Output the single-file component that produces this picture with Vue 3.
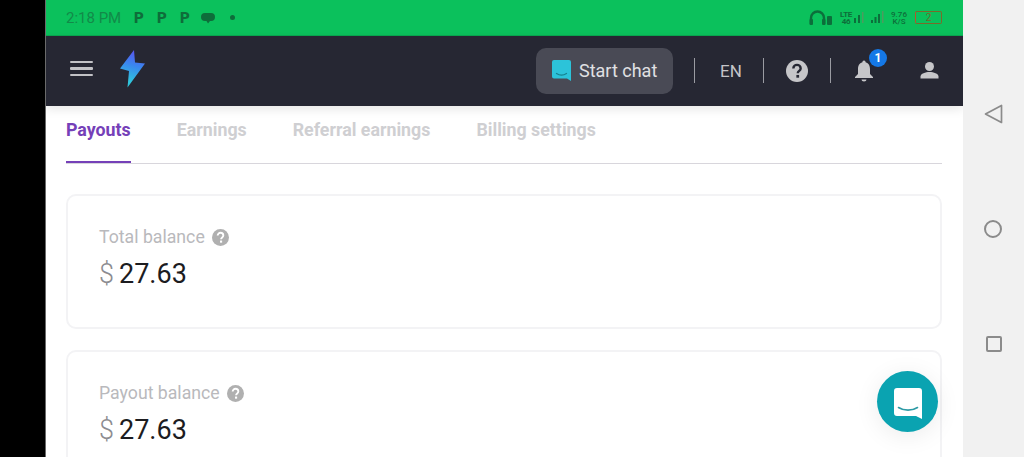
<script setup>
const tabs = ['Payouts', 'Earnings', 'Referral earnings', 'Billing settings']
const cards = [
  { label: 'Total balance', amount: '27.63' },
  { label: 'Payout balance', amount: '27.63' }
]
</script>

<template>
  <div class="screen">
    <div class="left-edge"></div>

    <div class="phone">
      <div class="status">
        <span class="time">2:18 PM</span>
        <span class="p">P</span>
        <span class="p">P</span>
        <span class="p">P</span>
        <svg class="msg" width="14" height="12" viewBox="0 0 14 12">
          <path d="M4 1h6a4 4 0 0 1 4 4 4 4 0 0 1-4 4H9l-2 2.500L5.500 9H4a4 4 0 0 1-4-4 4 4 0 0 1 4-4z" fill="#0e6d3a" />
        </svg>
        <span class="dot"></span>

        <div class="status-right">
          <svg width="23" height="16" viewBox="0 0 23 16">
            <path d="M2 14V8a6.500 6.500 0 0 1 13 0v6" fill="none" stroke="#0c6f3b" stroke-width="2.400" />
            <rect x="0.500" y="9" width="3.500" height="6" rx="1" fill="#0c6f3b" />
            <rect x="13" y="9" width="3.500" height="6" rx="1" fill="#0c6f3b" />
            <rect x="18" y="6" width="5" height="9" rx="1" fill="#0c6f3b" />
          </svg>
          <div class="lte-group">
            <span class="lte">LTE<br />46</span>
            <svg width="10" height="13" viewBox="0 0 10 13">
              <rect x="0" y="7" width="2" height="5" fill="#0c6f3b" />
              <rect x="4" y="4" width="2" height="8" fill="#0c6f3b" />
              <rect x="8" y="1" width="1.500" height="11" fill="#4d9c5e" />
            </svg>
          </div>
          <svg width="13" height="13" viewBox="0 0 13 13">
            <rect x="0" y="9" width="2" height="3" fill="#0c6f3b" />
            <rect x="3.500" y="6" width="2" height="6" fill="#0c6f3b" />
            <rect x="7" y="3" width="2" height="9" fill="#0c6f3b" />
            <rect x="11" y="0" width="1.500" height="12" fill="#4d9c5e" />
          </svg>
          <span class="speed">9.76<br />K/S</span>
          <div class="battery"><span>2</span></div>
        </div>
      </div>

      <header class="topbar">
        <div class="burger"><i></i><i></i><i></i></div>
        <svg class="logo" width="28" height="40" viewBox="0 0 28 40">
          <defs>
            <linearGradient id="bolt" x1="0.600" y1="0" x2="0.400" y2="1">
              <stop offset="0" stop-color="#5b52ee" />
              <stop offset="0.400" stop-color="#3a86ee" />
              <stop offset="0.850" stop-color="#2fc4dc" />
            </linearGradient>
          </defs>
          <path d="M16 1 2 19.500l9 2.500L9.500 38.500 27 14.500l-10-1z" fill="url(#bolt)" />
        </svg>

        <div class="actions">
          <button class="chat" type="button">
            <svg width="19" height="21" viewBox="0 0 19 21">
              <path d="M2 0h15a2 2 0 0 1 2 2v19l-4-2.500H2a2 2 0 0 1-2-2V2a2 2 0 0 1 2-2z" fill="#2cc3d9" />
              <path d="M4.500 13.500c3 2 7 2 10 0" fill="none" stroke="#16818f" stroke-width="1.300" stroke-linecap="round" />
            </svg>
            <span>Start chat</span>
          </button>
          <span class="sep first"></span>
          <span class="lang">EN</span>
          <span class="sep"></span>
          <svg class="help" width="22" height="22" viewBox="0 0 24 24">
            <circle cx="12" cy="12" r="12" fill="#c6c6c9" />
            <path d="M8 9.300a4 4 0 0 1 8 0c0 2.500-3.200 2.700-3.200 5.200" fill="none" stroke="#262733" stroke-width="2.600" />
            <rect x="11.300" y="16.300" width="3" height="3" fill="#262733" />
          </svg>
          <span class="sep"></span>
          <div class="bell">
            <svg width="20" height="22" viewBox="0 0 20 22">
              <path d="M10 0.500a1.600 1.600 0 0 1 1.600 1.700C14.800 3 16 5.800 16 9v5l3 3v1H1v-1l3-3V9c0-3.200 1.200-6 4.400-6.800A1.600 1.600 0 0 1 10 0.500z" fill="#c6c6c9" />
              <path d="M7.500 19.500h5a2.500 2 0 0 1-5 0z" fill="#c6c6c9" />
            </svg>
            <span class="badge">1</span>
          </div>
          <svg class="user" width="19" height="17" viewBox="0 0 19 17">
            <circle cx="9.500" cy="4.500" r="4.500" fill="#c6c6c9" />
            <path d="M0.500 16.500v-2c0-3 5-4.500 9-4.500s9 1.500 9 4.500v2z" fill="#c6c6c9" />
          </svg>
        </div>
      </header>

      <main class="content">
        <nav class="tabs">
          <a v-for="(tab, i) in tabs" :key="tab" class="tab" :class="{ active: i === 0 }">{{ tab }}</a>
        </nav>

        <section v-for="card in cards" :key="card.label" class="card">
          <div class="label">
            {{ card.label }}
            <svg width="17" height="17" viewBox="0 0 24 24">
              <circle cx="12" cy="12" r="12" fill="#b0b0b0" />
              <path d="M8 9.300a4 4 0 0 1 8 0c0 2.500-3.200 2.700-3.200 5.200" fill="none" stroke="#fff" stroke-width="2.600" />
              <rect x="11.300" y="16.300" width="3" height="3" fill="#fff" />
            </svg>
          </div>
          <div class="amount"><span class="cur">$</span>{{ card.amount }}</div>
        </section>
      </main>

      <button class="fab" type="button">
        <svg width="28" height="31" viewBox="0 0 28 31">
          <path d="M3 0h22a3 3 0 0 1 3 3v28l-6-3H3a3 3 0 0 1-3-3V3a3 3 0 0 1 3-3z" fill="#fff" />
          <path d="M4.500 19.500c5.500 3.500 13.500 3.500 19 0" fill="none" stroke="#2d9aa5" stroke-width="1.600" stroke-linecap="round" />
        </svg>
      </button>
    </div>

    <aside class="softkeys">
      <svg width="19" height="20" viewBox="0 0 19 20" class="back">
        <path d="M17.500 1.500v17L1.500 10z" fill="none" stroke="#8b8b8b" stroke-width="1.700" stroke-linejoin="round" />
      </svg>
      <span class="circle"></span>
      <span class="square"></span>
    </aside>
  </div>
</template>

<style scoped>
.screen {
  display: flex;
  width: 1024px;
  height: 457px;
  overflow: hidden;
  font-family: Roboto, "Liberation Sans", sans-serif;
}
.left-edge {
  width: 45px;
  background: #000;
  flex-shrink: 0;
  position: relative;
  z-index: 1;
  box-shadow: 1px 0 0 #6a6a6a;
}
.phone {
  position: relative;
  width: 918px;
  flex-shrink: 0;
  background: #fff;
  overflow: hidden;
}
.status {
  height: 36px;
  background: #0bc15c;
  display: flex;
  align-items: center;
  padding: 0 21px;
  box-sizing: border-box;
  border-bottom: 1px solid #0aa850;
}
.time {
  font-size: 15px;
  width: 68px;
  color: #128a49;
}
.p {
  font-size: 15px;
  font-weight: 900;
  width: 23px;
  color: #0e6d3a;
}
.msg {
  margin-left: -2px;
}
.dot {
  width: 5px;
  height: 5px;
  border-radius: 50%;
  background: #0e6d3a;
  margin-left: 15px;
}
.status-right {
  margin-left: auto;
  display: flex;
  align-items: center;
  gap: 7px;
}
.lte-group {
  display: flex;
  align-items: center;
  gap: 1px;
}
.lte,
.speed {
  font-size: 8px;
  line-height: 7px;
  font-weight: 700;
  color: #0e6d3a;
  text-align: center;
}
.lte {
  width: 14px;
  letter-spacing: -0.3px;
}
.speed {
  width: 18px;
  margin-left: -1px;
  font-weight: 500;
}
.battery {
  width: 27px;
  height: 13px;
  box-sizing: border-box;
  border: 1.500px solid #7a6a2a;
  border-left-color: #b4552b;
  border-radius: 2px;
  display: flex;
  align-items: center;
  justify-content: center;
  font-size: 10px;
  color: #6f6a2c;
}
.topbar {
  height: 70px;
  background: #262733;
  display: flex;
  align-items: center;
  padding-left: 25px;
  box-shadow: 0 3px 10px rgba(0, 0, 0, 0.1);
  position: relative;
}
.burger {
  display: flex;
  flex-direction: column;
  gap: 4px;
  width: 23px;
  margin-top: -5px;
}
.burger i {
  display: block;
  height: 2.500px;
  border-radius: 1px;
  background: #c2c2c6;
}
.logo {
  margin-left: 25px;
  margin-top: -5px;
}
.actions {
  margin-left: auto;
  display: flex;
  align-items: center;
  margin-right: 24px;
  margin-top: -1px;
}
.chat {
  display: flex;
  align-items: center;
  gap: 8px;
  height: 46px;
  width: 137px;
  padding: 0 0 0 16px;
  border: none;
  border-radius: 10px;
  background: #494a55;
  color: #e0e0e3;
  font-family: inherit;
  font-size: 18px;
  box-sizing: border-box;
}
.sep {
  width: 1px;
  height: 25px;
  background: #9a9ba2;
  flex-shrink: 0;
}
.sep.first {
  margin-left: 21px;
}
.lang {
  width: 68px;
  padding-left: 4px;
  box-sizing: border-box;
  text-align: center;
  color: #c4c4c8;
  font-size: 17px;
}
.help {
  margin: 0 22px;
}
.bell {
  position: relative;
  width: 20px;
  height: 22px;
  margin-left: 23px;
}
.badge {
  position: absolute;
  top: -11px;
  left: 15px;
  width: 18px;
  height: 18px;
  border-radius: 50%;
  background: #1578e6;
  color: #fff;
  font-size: 12px;
  font-weight: 700;
  line-height: 18px;
  text-align: center;
}
.user {
  margin-left: 46px;
}
.content {
  padding: 0 21px;
}
.tabs {
  display: flex;
  gap: 46px;
  height: 57px;
  border-bottom: 1px solid #d8d6dc;
  margin-bottom: 30px;
}
.tab {
  font-size: 17.8px;
  font-weight: 700;
  color: #cfcfd2;
  padding-top: 13px;
  height: 56px;
  box-sizing: border-box;
}
.tab.active {
  color: #7540b8;
  height: 57px;
  border-bottom: 2px solid #7540b8;
}
.card {
  height: 135px;
  margin-bottom: 21px;
  border: 2px solid #f3f3f5;
  border-radius: 10px;
  padding: 29px 31px 0;
  box-sizing: border-box;
}
.label {
  display: flex;
  align-items: center;
  gap: 7px;
  font-size: 17.7px;
  color: #b9b9bc;
  height: 24px;
}
.amount {
  margin-top: 9px;
  font-size: 27px;
  color: #1c1c1f;
}
.cur {
  color: #8c8c90;
  font-weight: 300;
  margin-right: 5px;
}
.fab {
  position: absolute;
  top: 371px;
  left: 832px;
  width: 61px;
  height: 61px;
  border: none;
  border-radius: 50%;
  background: #0aa3b1;
  padding: 0;
  display: flex;
  align-items: center;
  justify-content: center;
  box-shadow: 0 4px 24px rgba(0, 0, 0, 0.08);
}
.fab svg {
  margin-top: 3px;
}
.softkeys {
  flex: 1;
  background: #f1f1f1;
  display: flex;
  flex-direction: column;
  align-items: center;
}
.back {
  margin-top: 104px;
  margin-left: -1px;
}
.circle {
  width: 14px;
  height: 14px;
  border: 2px solid #8b8b8b;
  border-radius: 50%;
  margin: 96px 1px 0 0;
}
.square {
  width: 12px;
  height: 12px;
  border: 2px solid #8b8b8b;
  border-radius: 2px;
  margin-top: 98px;
}
</style>
